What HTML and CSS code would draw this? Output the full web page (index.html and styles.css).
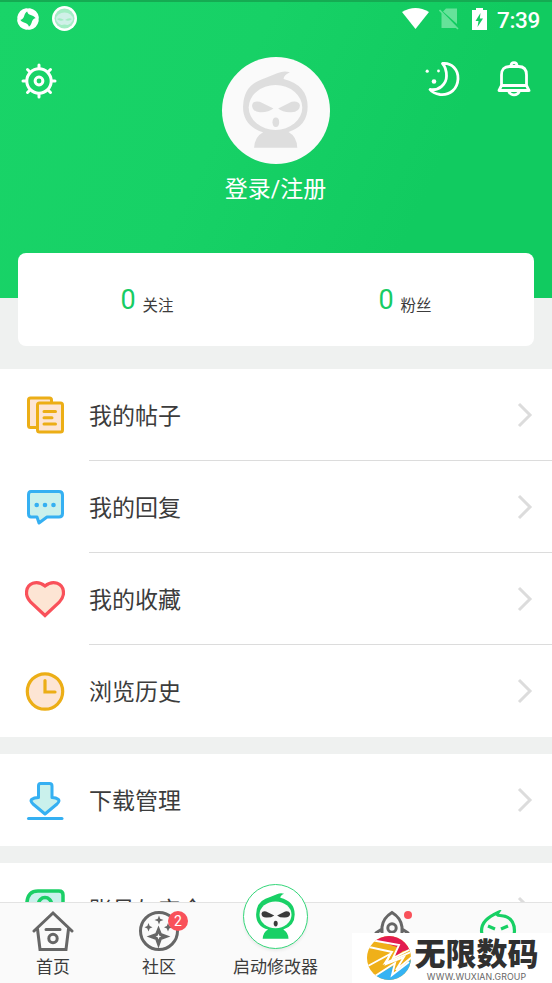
FILE: index.html
```html
<!DOCTYPE html>
<html lang="zh-CN">
<head>
<meta charset="utf-8">
<title>我的</title>
<link rel="stylesheet" href="styles.css">
</head>
<body>
<svg class="defs" width="0" height="0">
  <symbol id="mascot" viewBox="131 80 194 230">
    <path class="m-skin" d="M164 309Q166 276 191 263Q131 245 131 187Q133 128 178 109Q195 102 235 86Q254 78 271 84Q253 92 252 104Q324 122 324 187Q324 244 267 262Q292 276 293 309Z"/>
    <ellipse class="m-face" cx="228" cy="189" rx="80" ry="67"/>
    <path class="m-eye" d="M158 182Q161 168 181 172L222 192Q207 204 181 203Q158 201 158 182ZM301 182Q297 168 276 172L236 192Q249 204 275 203Q301 202 301 182Z"/>
    <ellipse class="m-eye" cx="229" cy="233" rx="10" ry="14"/>
  </symbol>
  <symbol id="chevron" viewBox="0 0 16 26"><path d="M2 2L13 13L2 24" fill="none" stroke="#dcdcdc" stroke-width="3"/></symbol>
</svg>
<div class="screen">
  <main class="content">
    <header class="hero">
      <div class="status">
        <svg class="swirl" width="22" height="22" viewBox="0 0 22 22" fill="#fff"><path id="blade" d="M.3 9Q2 1.500 9 .2Q12.500 0 12 2.500Q8.500 3.500 7.500 7Q6.500 11.500 3 12Q0 12 .3 9Z"/><use href="#blade" transform="rotate(90 11 11)"/><use href="#blade" transform="rotate(180 11 11)"/><use href="#blade" transform="rotate(270 11 11)"/></svg>
        <svg class="face" width="25" height="25" viewBox="0 0 25 25"><circle cx="12.500" cy="12.500" r="12.500" fill="#fff"/><circle cx="12.500" cy="12.500" r="10" fill="#a3edc4"/><ellipse cx="12.500" cy="13" rx="8.500" ry="6.500" fill="#d0f0e8"/><path d="M5 13Q8 11 12 14Q8 16 5 13ZM20 13Q17 11 13 14Q17 16 20 13ZM7 20Q12.500 17 18 20Z" fill="#a3edc4"/></svg>
        <svg class="wifi" width="27" height="21" viewBox="0 0 27 21"><path d="M0 4Q13.500-4 27 4L13.500 21Z" fill="#fff"/></svg>
        <svg class="nosim" width="20" height="22" viewBox="0 0 20 22"><path d="M7 .5H18V16L4 3.500ZM2.500 5L18 20H2.500Z" fill="#66e29a"/><path d="M.5 2L19 21" stroke="#66e29a" stroke-width="1.600"/></svg>
        <svg class="battery" width="15" height="22" viewBox="0 0 15 22"><path d="M0 2H4V0H11V2H15V22H0Z" fill="#fff"/><path d="M8.500 5L3.500 13H6.500L5.500 19L11 10.500H7.800Z" fill="#12cc61"/></svg>
        <span class="time">7:39</span>
      </div>
      <div class="profile">
        <svg class="gear" width="36" height="36" viewBox="-18 -18 36 36" fill="none" stroke="#fff" stroke-width="3" stroke-linecap="round"><circle r="12.200"/><circle r="3.900"/><path d="M0-13V-16M0 13V16M13 0H16M-13 0H-16M9.500-9.500L11.500-11.500M-9.500-9.500L-11.500-11.500M9.500 9.500L11.500 11.500M-9.500 9.500L-11.500 11.500"/></svg>
        <div class="user">
          <div class="avatar"><svg width="65" height="77"><use href="#mascot"/></svg></div>
          <div class="login">登录/注册</div>
        </div>
        <div class="tools">
          <svg width="37" height="37" viewBox="0 0 37 37" fill="none" stroke="#fff"><path d="M18.500 2.500C28 1.500 34.500 9 34 18C33.500 28 26 34.500 16 33.500Q9 32.500 6 28.500C15 30 22.500 23 22.500 15Q22.500 7 18.500 2.500Z" stroke-width="2.800" stroke-linejoin="round"/><g fill="#fff" stroke="none"><circle cx="3.200" cy="10.200" r="1.600"/><circle cx="14.500" cy="10" r="1.400"/><circle cx="10" cy="20.500" r="2.300"/></g></svg>
          <svg width="34" height="36" viewBox="0 0 34 36" fill="none" stroke="#fff" stroke-width="2.800" stroke-linejoin="round"><path d="M4.500 24.500V14Q4.500 5.500 12.500 5.500H21.500Q29.500 5.500 29.500 14V24.500L32 29.500H2L4.500 24.500H29.500M11.500 30Q13 33.800 17 33.800T22.500 30M14 5Q14 1.700 17 1.700T20 5"/></svg>
        </div>
      </div>
    </header>
    <section class="stats">
      <div class="stat"><b>0</b><span>关注</span></div>
      <div class="stat"><b>0</b><span>粉丝</span></div>
    </section>
    <section class="group">
      <div class="row">
        <svg class="icon" width="40" height="40" viewBox="0 0 40 40" fill="#fde5d4" stroke="#ecae16" stroke-width="3"><rect x="3.500" y="3" width="23" height="29.500" rx="2"/><rect x="12.500" y="8" width="25" height="29" rx="2"/><path d="M19 16.500H30.500M19 22.700H27M19 29H30.500" stroke-linecap="round"/></svg>
        <div class="label">我的帖子</div><svg class="arrow"><use href="#chevron"/></svg>
      </div>
      <div class="row">
        <svg class="icon" width="40" height="40" viewBox="0 0 40 40"><path d="M6 4.500H34Q37.500 4.500 37.500 8V26.500Q37.500 30 34 30H22L14 36L12 30H6Q3.500 30 3.500 26.500V8Q3.500 4.500 6 4.500Z" fill="#caf1ec" stroke="#35b0f2" stroke-width="3" stroke-linejoin="round"/><g fill="#35b0f2"><circle cx="11.700" cy="18" r="2.300"/><circle cx="20" cy="18" r="2.300"/><circle cx="28.500" cy="18" r="2.300"/></g></svg>
        <div class="label">我的回复</div><svg class="arrow"><use href="#chevron"/></svg>
      </div>
      <div class="row">
        <svg class="icon" width="40" height="40" viewBox="0 0 40 40"><path d="M20 36.500L6 23.500Q1.500 18.500 1.500 14C1.500 4 12 .5 20 7C28 .5 38.500 4 38.500 14Q38.500 18.500 34 23.500Z" fill="#fde5d4" stroke="#f9515a" stroke-width="3.200"/></svg>
        <div class="label">我的收藏</div><svg class="arrow"><use href="#chevron"/></svg>
      </div>
      <div class="row">
        <svg class="icon" width="40" height="40" viewBox="0 0 40 40" stroke="#ecae16" stroke-width="3.200"><circle cx="20" cy="20.500" r="17.700" fill="#fde5d4"/><path d="M20 9.500V21H30" fill="none" stroke-linecap="round"/></svg>
        <div class="label">浏览历史</div><svg class="arrow"><use href="#chevron"/></svg>
      </div>
    </section>
    <section class="group">
      <div class="row">
        <svg class="icon" width="40" height="40" viewBox="0 0 40 40" fill="#caf1ec" stroke="#35b0f2" stroke-width="3" stroke-linejoin="round" stroke-linecap="round"><path d="M15.500 3.500H24.500Q27 3.500 27 6V17.500Q31 17.500 33.500 19.500Q35 21 32 24L20 34L8 24Q5 21 6.500 19.500Q9 17.500 13.500 17.500V6Q13.500 3.500 15.500 3.500Z"/><path d="M3.500 38.500H37"/></svg>
        <div class="label">下载管理</div><svg class="arrow"><use href="#chevron"/></svg>
      </div>
    </section>
    <section class="group">
      <div class="row">
        <svg class="icon" width="40" height="40" viewBox="0 0 40 40" fill="#caf1ec" stroke="#1acf66" stroke-width="3.500"><path d="M13 2H34Q38 2 38 6V37H2V13Q3 2 13 2Z"/><circle cx="20" cy="15" r="6.500"/></svg>
        <div class="label">账号与安全</div><svg class="arrow"><use href="#chevron"/></svg>
      </div>
    </section>
  </main>
  <nav class="tabs">
    <div class="tab home">
      <svg width="42" height="42" viewBox="0 0 42 42" fill="none" stroke="#666" stroke-width="3"><path d="M2 21L21 3L40 21M5.500 19L8 39.500H34L36.500 19M14 19.500H28" stroke-linecap="round"/><circle cx="21" cy="28.500" r="4.200"/></svg>
      <span>首页</span>
    </div>
    <div class="tab community">
      <svg width="42" height="42" viewBox="0 0 42 42"><circle cx="21" cy="21" r="18.500" fill="none" stroke="#666" stroke-width="3"/><path d="M20.500 19.500L22.500 24.500L28 26.500L22.500 28.500L20.500 34L18.500 28.500L13 26.500L18.500 24.500Z" fill="none" stroke="#666" stroke-width="3"/><path d="M21 5.500L22.200 8.800L25.500 10L22.200 11.200L21 14.500L19.800 11.200L16.500 10L19.800 8.800ZM10.500 13L11.700 16L14.500 17.200L11.700 18.400L10.500 21.500L9.300 18.400L6.500 17.200L9.300 16ZM30 13L31.200 16L34.500 17.200L31.200 18.400L30 21.500L28.800 18.400L26 17.200L28.800 16Z" fill="#666"/></svg>
      <i class="badge">2</i>
      <span>社区</span>
    </div>
    <div class="tab launch">
      <div class="disc"><svg width="39" height="46"><use href="#mascot"/></svg></div>
      <span>启动修改器</span>
    </div>
    <div class="tab rocket">
      <svg width="42" height="42" viewBox="0 0 42 42" fill="none" stroke="#666" stroke-width="3"><path d="M11 29V17Q12 8 21 2.500Q30 8 31 17V29M11 19L5 23Q3 25 3 32M31 19L37 23Q39 25 39 32"/><circle cx="21" cy="18" r="4.200"/></svg>
      <i class="dot"></i>
    </div>
    <div class="tab me">
      <svg width="42" height="42" viewBox="0 0 42 42" fill="none" stroke="#17d064" stroke-width="3.200"><path d="M23 5.500C34 6 37.500 13 37.500 21C37 31 30 36 21 36S5 31 4.500 21C4.500 12 11 7 21 2.500Q19 5.500 23 5.500M11 16L18 19M31 16L24 19"/></svg>
    </div>
    <div class="brand">
      <svg width="46" height="46" viewBox="0 0 46 46"><defs><clipPath id="ball"><circle cx="23" cy="23" r="22"/></clipPath></defs><g clip-path="url(#ball)"><path fill="#efb019" d="M0 0H46V46H0Z"/><path fill="#e31b50" d="M6 0H46V15L37 16L29 22L31 12L9 5Z"/><path fill="#35b3f3" d="M9 41L27 31L26 40L46 24V46H9Z"/><g fill="none" stroke="#fff" stroke-width="1.900"><path d="M5 5L33 10L27 23L45 14"/><path d="M3 12L26 17L19 28L45 17"/><path d="M0 32L24 19L20 29L38 22L30 35L46 22"/><path d="M6 43L29 28L26 40L43 27"/></g></g></svg>
      <div class="brand-text"><strong>无限数码</strong><small>WWW.WUXIAN.GROUP</small></div>
    </div>
  </nav>
</div>
</body>
</html>
```
FILE: styles.css
```css
* { box-sizing: border-box; }
body { margin: 0; font-family: Roboto, "Noto Sans CJK SC", sans-serif; color: #3c3c3c; }
svg { display: block; flex: none; }
.defs { position: absolute; }
.m-skin { fill: var(--skin); }
.m-face { fill: #fafafa; }
.m-eye { fill: var(--eye); }

.screen { height: 983px; display: flex; flex-direction: column; overflow: hidden; background: #eff1f0; }
.content { height: 902px; overflow: hidden; }

.hero { height: 298px; background: linear-gradient(115deg, #19d468 0%, #17d166 40%, #11cb60 75%, #11cb60 100%); border-top: 2px solid #15ab52; }
.status { height: 36px; display: flex; align-items: center; padding: 0 12px 0 17px; color: #fff; }
.swirl { margin: -2px 13px 0 0; }
.face { margin-top: -3px; }
.wifi { margin: -3px 10px 0 auto; }
.nosim { margin: -2px 13px 0 0; }
.battery { margin: -3px 10px 0 0; }
.time { font-size: 22.5px; line-height: 30px; width: 43px; letter-spacing: -.3px; font-weight: 500; }
.profile { display: flex; justify-content: space-between; padding: 19px 21px 0 21px; }
.gear { margin-top: 6px; }
.user { width: 110px; margin-left: 70px; display: flex; flex-direction: column; align-items: center; }
.avatar { width: 108px; height: 107px; border-radius: 50%; background: #fafafa; display: flex; align-items: center; justify-content: center; padding-bottom: 2px; --skin: #dedede; --eye: #dedede; }
.login { color: #fff; font-size: 23px; line-height: 34px; margin-top: 9px; white-space: nowrap; }
.tools { display: flex; gap: 36px; padding-top: 4px; }

.stats { position: relative; height: 93px; margin: -45px 18px 23px; background: #fff; border-radius: 8px; display: flex; }
.stat { flex: 1; display: flex; align-items: baseline; justify-content: center; padding-top: 29px; gap: 7px; }
.stat b { font-size: 27px; line-height: 36px; font-weight: 400; color: #17cc64; }
.stat span { position: relative; top: 2px; font-size: 15.5px; }

.group { background: #fff; margin-bottom: 17px; }
.row { height: 92px; display: flex; align-items: center; padding-left: 25px; background: linear-gradient(#dcdcdc, #dcdcdc) 89px 100% / 463px 1px no-repeat; }
.row:last-child { background: none; }
.icon { margin-top: -1px; }
.label { flex: 1; margin-left: 24px; padding-top: 3px; line-height: 34px; font-size: 23px; }
.arrow { width: 16px; height: 26px; margin-right: 19px; }

.tabs { position: relative; height: 81px; display: flex; background: #fafafa; border-top: 1px solid #e3e3e3; }
.tab { position: relative; flex: 1; display: flex; flex-direction: column; align-items: center; padding-top: 7px; }
.tab span { font-size: 17px; line-height: 24px; margin-top: 3px; white-space: nowrap; }
.tabs .home, .tabs .community { flex: 0 0 106px; }
.tabs .launch { flex: 0 0 127px; padding: 0; }
.tabs .rocket { flex: 0 0 105px; }
.tabs .me { padding-right: 1px; }
.badge { position: absolute; left: 62px; top: 8px; width: 20px; height: 20px; border-radius: 50%; background: #f9515a; color: #fff; font: 400 14px/21px Roboto, sans-serif; text-align: center; }
.disc { width: 65px; height: 65px; margin-top: -19px; border: 1.5px solid #35d77a; border-radius: 50%; background: #fff; box-shadow: 0 2px 3px #0001; display: flex; align-items: center; justify-content: center; padding-bottom: 2px; --skin: #18d065; --eye: #3a3a3a; }
.launch .disc + span { margin-top: 6px; }
.dot { position: absolute; left: 65px; top: 8px; width: 8px; height: 8px; border-radius: 50%; background: #f9515a; }

.brand { position: absolute; right: 0; top: 30px; width: 200px; height: 50px; background: #fff; display: flex; padding: 2px 0 0 14px; gap: 3px; }
.brand-text { display: flex; flex-direction: column; align-items: center; width: 123px; }
.brand strong { font: 900 31px/34px "Noto Sans CJK SC", sans-serif; color: #303030; white-space: nowrap; }
.brand small { font: 8.8px/10px Inter, sans-serif; color: #666; letter-spacing: .1px; margin-top: 3px; white-space: nowrap; }
```
